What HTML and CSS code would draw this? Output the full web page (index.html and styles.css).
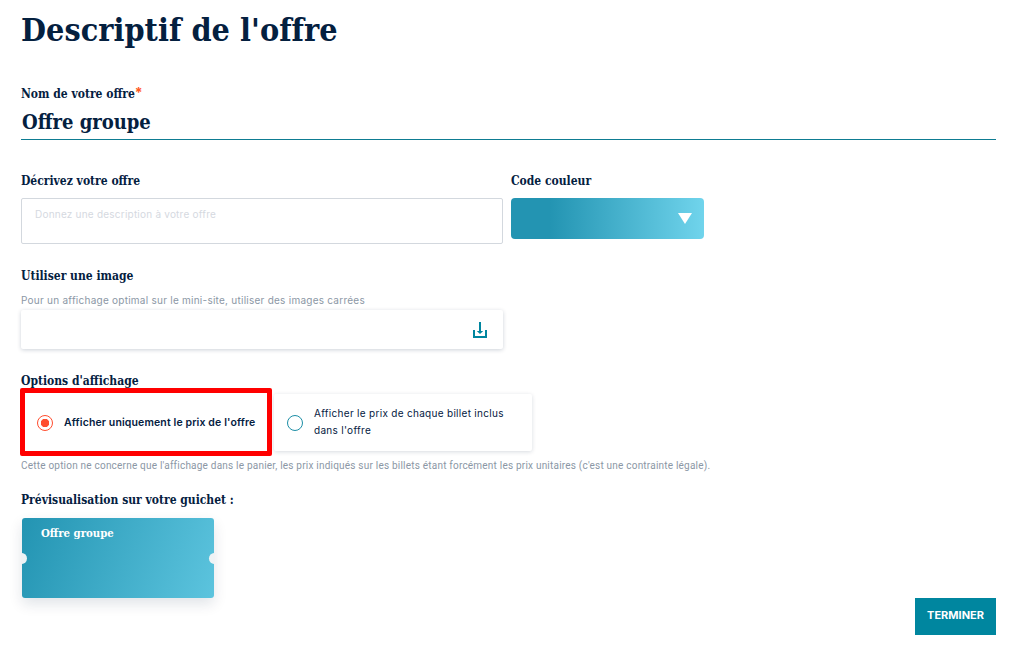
FILE: index.html
```html
<!DOCTYPE html>
<html lang="fr">
<head>
  <meta charset="UTF-8">
  <title>Descriptif de l'offre</title>
  <link rel="stylesheet" href="styles.css">
</head>
<body>
  <div class="container">
    <h1>Descriptif de l'offre</h1>

    <div class="name-field">
      <label class="label">Nom de votre offre<span class="required">*</span></label>
      <div class="name-value">Offre groupe</div>
    </div>

    <div class="desc-row">
      <div class="desc-col">
        <label class="label">Décrivez votre offre</label>
        <div class="textarea">Donnez une description à votre offre</div>
      </div>
      <div class="color-col">
        <label class="label">Code couleur</label>
        <div class="color-select"><span class="caret"></span></div>
      </div>
    </div>

    <div class="image-field">
      <label class="label">Utiliser une image</label>
      <p class="help">Pour un affichage optimal sur le mini-site, utiliser des images carrées</p>
      <div class="upload">
        <svg width="14" height="16" viewBox="0 0 14 16">
          <path d="M6 0H8V9H10.2L7 12L3.8 9H6Z" fill="#00869f"/>
          <path d="M1 8V15H13V8" fill="none" stroke="#00869f" stroke-width="2"/>
        </svg>
      </div>
    </div>

    <div class="options-field">
      <label class="label">Options d'affichage</label>
      <div class="options">
        <div class="option option-selected">
          <span class="radio radio-on"></span>
          <span>Afficher uniquement le prix de l'offre</span>
        </div>
        <div class="option">
          <span class="radio"></span>
          <span>Afficher le prix de chaque billet inclus dans l'offre</span>
        </div>
      </div>
      <p class="help note">Cette option ne concerne que l'affichage dans le panier, les prix indiqués sur les billets étant forcément les prix unitaires (c'est une contrainte légale).</p>
    </div>

    <div class="footer">
      <div class="preview">
        <label class="label">Prévisualisation sur votre guichet :</label>
        <div class="ticket">Offre groupe</div>
      </div>
      <button class="finish">TERMINER</button>
    </div>
  </div>
</body>
</html>
```

FILE: styles.css
```css
* {
  box-sizing: border-box;
}

body {
  margin: 0;
  background: #ffffff;
  color: #04203f;
  font-family: 'Inter', sans-serif;
}

.container {
  padding: 9px 22px 0 21px;
}

h1 {
  margin: 0;
  font-family: 'DejaVu Serif Condensed', 'DejaVu Serif', serif;
  font-size: 32px;
  line-height: 42px;
  font-weight: bold;
  letter-spacing: 0.05px;
}

.label {
  display: block;
  font-family: 'DejaVu Serif Condensed', 'DejaVu Serif', serif;
  font-size: 12px;
  line-height: 16px;
  font-weight: bold;
}

.required {
  color: #ff5a1f;
  font-family: 'Inter', sans-serif;
  font-size: 14px;
  line-height: 10px;
}

.name-field {
  margin-top: 35px;
  height: 54px;
  border-bottom: 1px solid #0e7c92;
}

.name-value {
  margin: 6px 0 0 1px;
  font-family: 'DejaVu Serif Condensed', 'DejaVu Serif', serif;
  font-size: 20px;
  line-height: 28px;
  font-weight: bold;
}

.desc-row {
  display: flex;
  gap: 8px;
  margin-top: 33px;
}

.desc-col .label,
.color-col .label {
  margin-bottom: 9px;
}

.textarea {
  width: 482px;
  height: 46px;
  padding: 8px 13px;
  border: 1px solid #d3d8de;
  border-radius: 2px;
  color: #d5d9df;
  font-size: 10px;
  line-height: 14px;
  letter-spacing: 0.22px;
}

.color-select {
  display: flex;
  align-items: center;
  justify-content: flex-end;
  width: 193px;
  height: 41px;
  padding-right: 12px;
  border-radius: 4px;
  background: linear-gradient(90deg, #2394b2 20%, #70d4ec 100%);
}

.caret {
  width: 0;
  height: 0;
  border-left: 7px solid transparent;
  border-right: 7px solid transparent;
  border-top: 11px solid #ffffff;
}

.image-field {
  margin-top: 24px;
}

.help {
  margin: 0;
  color: #8b97a5;
  font-size: 10px;
  line-height: 14px;
  letter-spacing: 0.25px;
}

.image-field .help {
  margin-top: 9px;
}

.upload {
  display: flex;
  align-items: center;
  justify-content: flex-end;
  width: 482px;
  height: 39px;
  margin-top: 3px;
  padding-right: 16px;
  border-radius: 2px;
  box-shadow: 0 1px 4px rgba(4, 32, 63, 0.2);
}

.options-field {
  margin-top: 24px;
}

.options {
  display: flex;
  align-items: center;
  gap: 2px;
  margin-top: -1px;
  margin-left: -1px;
}

.option {
  display: flex;
  align-items: center;
  gap: 11px;
  width: 258px;
  height: 57px;
  padding: 0 16px 0 13px;
  border-radius: 2px;
  box-shadow: 0 1px 4px rgba(4, 32, 63, 0.16);
  font-size: 10px;
  line-height: 17px;
  letter-spacing: 0.3px;
}

.option-selected {
  width: 252px;
  height: 68px;
  padding: 0 0 0 12px;
  border: 5px solid #ff0000;
  border-radius: 2px;
  box-shadow: none;
  font-size: 10.5px;
  font-weight: 600;
  letter-spacing: 0.13px;
}

.radio {
  flex: none;
  width: 16px;
  height: 16px;
  margin-top: 1px;
  border: 1.5px solid #1c8ea6;
  border-radius: 50%;
}

.radio-on {
  border: 1px solid #ff4d2e;
  background: radial-gradient(circle, #ff4d2e 0 4px, transparent 4.5px);
}

.note {
  margin-top: 3px;
  font-family: 'Roboto', sans-serif;
  letter-spacing: 0.21px;
}

.footer {
  display: flex;
  justify-content: space-between;
  align-items: flex-end;
  margin-top: 19px;
}

.preview {
  margin-bottom: 37px;
}

.ticket {
  position: relative;
  overflow: hidden;
  width: 192px;
  height: 80px;
  margin: 10px 0 0 1px;
  padding: 7px 19px;
  border-radius: 3px;
  background: linear-gradient(110deg, #2394b2 0%, #5cc4de 100%);
  box-shadow: 0 6px 14px rgba(4, 32, 63, 0.12);
  color: #ffffff;
  font-family: 'DejaVu Serif Condensed', 'DejaVu Serif', serif;
  font-size: 11.3px;
  line-height: 16px;
  font-weight: bold;
}

.ticket::before,
.ticket::after {
  content: "";
  position: absolute;
  top: 35px;
  width: 11px;
  height: 11px;
  border-radius: 50%;
  background: #eef3f5;
}

.ticket::before {
  left: -6px;
}

.ticket::after {
  right: -6px;
}

.finish {
  width: 81px;
  height: 37px;
  padding: 0 0 3px;
  border: none;
  background: #00869f;
  color: #ffffff;
  font-family: 'Inter', sans-serif;
  font-size: 11px;
  font-weight: bold;
}
```
